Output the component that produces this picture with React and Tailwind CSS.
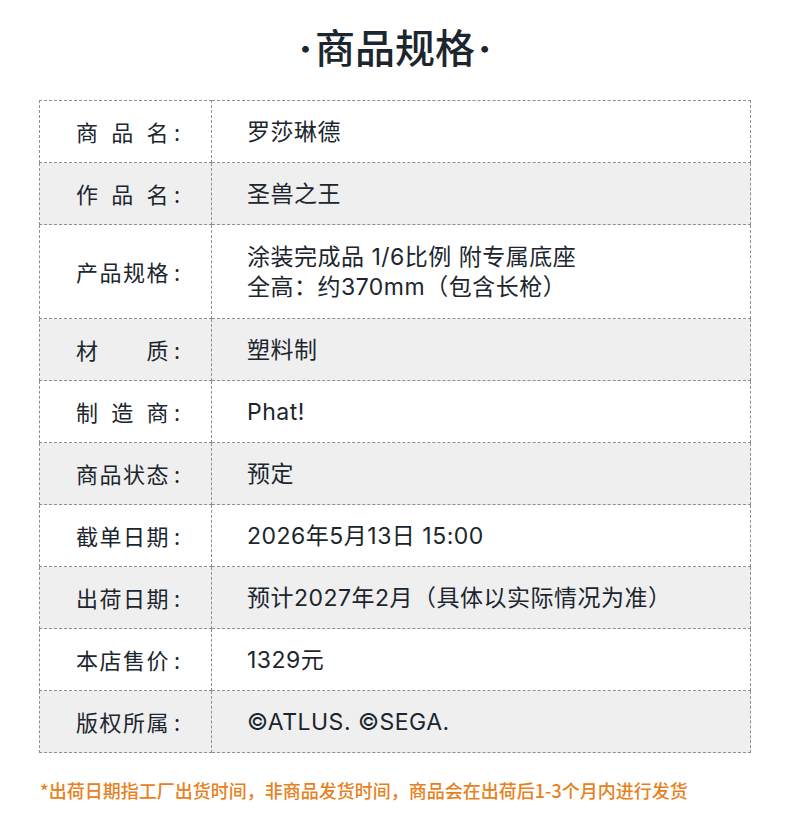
import React from "react"

const rows = [
    { label: ["商", "品", "名"], value: ["罗莎琳德"] },
    { label: ["作", "品", "名"], value: ["圣兽之王"] },
    { label: ["产品规格"], value: ["涂装完成品 1/6比例 附专属底座", "全高：约370mm（包含长枪）"] },
    { label: ["材", "质"], value: ["塑料制"] },
    { label: ["制", "造", "商"], value: ["Phat!"] },
    { label: ["商品状态"], value: ["预定"] },
    { label: ["截单日期"], value: ["2026年5月13日 15:00"] },
    { label: ["出荷日期"], value: ["预计2027年2月（具体以实际情况为准）"] },
    { label: ["本店售价"], value: ["1329元"] },
    { label: ["版权所属"], value: ["©ATLUS. ©SEGA."] },
]

function App() {

    return (
        <div className="w-[790px] h-[822px] bg-white font-['Inter','Noto_Sans_CJK_SC',sans-serif] text-[#1c262e]" >
            <h1 className="h-[100px] flex items-center justify-center pb-[2px] text-[40px] font-medium" >
                <span className="font-['Inter'] font-bold" >·</span>
                <span className="mx-[3px]" >商品规格</span>
                <span className="font-['Inter'] font-bold" >·</span>
            </h1>
            <div className="px-[39px]" >
                <table className="w-full border-collapse text-[23px]" >
                    <tbody>
                        {
                            rows.map((r, i) => (
                                <tr
                                    key={i}
                                    className={`${i % 2 === 1 ? "bg-[#efefef]" : "bg-white"} ${r.value.length > 1 ? "h-[94px]" : "h-[62px]"}`}
                                >
                                    <td className="w-[172px] border border-dashed border-[#8f8f8f] pl-[36px] p-0" >
                                        <div className="flex items-center font-['Noto_Sans_CJK_SC',sans-serif] text-[22px]" >
                                            <div className="w-[94px] flex justify-between tracking-[1.5px]" >
                                                {
                                                    r.label.map((c, j) => (
                                                        <span key={j} >{c}</span>
                                                    ))
                                                }
                                            </div>
                                            <span className="ml-[4px]" >:</span>
                                        </div>
                                    </td>
                                    <td className="border border-dashed border-[#8f8f8f] pl-[35px] p-0 leading-[30px] tracking-[0.5px]" >
                                        {
                                            r.value.map((v, j) => (
                                                <div key={j} >{v}</div>
                                            ))
                                        }
                                    </td>
                                </tr>
                            ))
                        }
                    </tbody>
                </table>
            </div>
            <p className="mt-[24px] pl-[40px] text-[18px] font-medium text-[#e8811c] font-['Noto_Sans_CJK_SC',sans-serif]" >
                *出荷日期指工厂出货时间，非商品发货时间，商品会在出荷后1-3个月内进行发货
            </p>
        </div>
    )

}

export default App
